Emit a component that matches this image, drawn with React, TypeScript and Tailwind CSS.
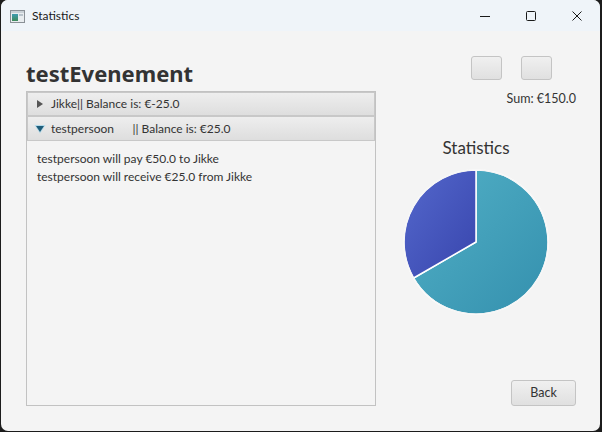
import React from "react";

const font = { fontFamily: 'Lato, "Noto Sans", sans-serif' };
const titleFont = { fontFamily: '"Noto Sans", "Open Sans", sans-serif' };

function AppIcon() {
  return (
    <svg width="15" height="13" viewBox="0 0 15 13">
      <rect x="0.5" y="0.5" width="14" height="12" fill="#e8ecef" stroke="#8a9096" />
      <rect x="1" y="1" width="13" height="2" fill="#c9d0d6" />
      <defs>
        <linearGradient id="ig" x1="0" y1="0" x2="0" y2="1">
          <stop offset="0" stopColor="#3e9bb0" />
          <stop offset="1" stopColor="#3f8a5a" />
        </linearGradient>
      </defs>
      <rect x="2" y="4" width="6" height="7" fill="url(#ig)" />
      <rect x="9" y="4" width="4" height="2" fill="#b9c3cb" />
    </svg>
  );
}

function Pie() {
  return (
    <svg width="146" height="146" viewBox="-1 -1 146 146">
      <defs>
        <linearGradient id="teal" x1="0" y1="0" x2="1" y2="1">
          <stop offset="0" stopColor="#52b0c6" />
          <stop offset="1" stopColor="#3490ae" />
        </linearGradient>
        <linearGradient id="blue" x1="0" y1="0" x2="1" y2="1">
          <stop offset="0" stopColor="#5468cc" />
          <stop offset="1" stopColor="#3845ad" />
        </linearGradient>
      </defs>
      <path d="M72,72 L9.65,108 A72,72 0 1 0 72,0 Z" fill="url(#teal)" stroke="#ffffff" strokeWidth="1.5" strokeLinejoin="round" />
      <path d="M72,72 L72,0 A72,72 0 0 0 9.65,108 Z" fill="url(#blue)" stroke="#ffffff" strokeWidth="1.5" strokeLinejoin="round" />
      <circle cx="72" cy="72" r="72" fill="none" stroke="#f4f4f4" strokeWidth="1" />
    </svg>
  );
}

export default function App() {
  return (
    <div className="w-[602px] h-[432px] bg-[#1c1c1c] pl-[1px] pr-[2px] pb-[1px]" style={font}>
      <div className="w-full h-full rounded-[7px] overflow-hidden bg-[#f4f4f4] flex flex-col">
        {/* title bar */}
        <div className="h-[31px] bg-[#eff4f9] flex items-center shrink-0">
          <div className="ml-[9px] mt-[1px] flex items-center">
            <AppIcon />
          </div>
          <span className="ml-[7px] text-[12px] text-[#1a1a1a]">Statistics</span>
          <div className="ml-auto flex items-center h-full">
            <div className="w-[46px] h-full flex items-center justify-center">
              <svg width="10" height="10" viewBox="0 0 10 10"><line x1="0" y1="5.5" x2="10" y2="5.5" stroke="#1a1a1a" strokeWidth="1" /></svg>
            </div>
            <div className="w-[46px] h-full flex items-center justify-center">
              <svg width="10" height="10" viewBox="0 0 10 10"><rect x="0.5" y="0.5" width="9" height="9" rx="1" fill="none" stroke="#1a1a1a" strokeWidth="1" /></svg>
            </div>
            <div className="w-[46px] h-full flex items-center justify-center">
              <svg width="10" height="10" viewBox="0 0 10 10"><path d="M0.5 0.5 L9.5 9.5 M9.5 0.5 L0.5 9.5" stroke="#1a1a1a" strokeWidth="1" /></svg>
            </div>
          </div>
        </div>
        {/* content */}
        <div className="flex-1 flex">
          <div className="ml-[25px] w-[350px] flex flex-col pb-[25px]">
            <div className="h-[60px] flex items-end pb-[3px]">
              <h1 className="text-[22px] font-bold text-[#333333] leading-[30px]" style={titleFont}>testEvenement</h1>
            </div>
            <div className="flex-1 border border-[#c2c2c2] flex flex-col">
              <div className="h-[24px] border border-[#c8c8c8] bg-gradient-to-b from-[#eeeeee] to-[#dedede] flex items-center">
                <svg className="ml-[9px]" width="6" height="8" viewBox="0 0 6 8"><path d="M0 0 L6 4 L0 8 Z" fill="#555555" /></svg>
                <span className="ml-[8px] text-[12px] text-[#333333]">Jikke|| Balance is: €-25.0</span>
              </div>
              <div className="h-[25px] border border-[#c8c8c8] bg-gradient-to-b from-[#eeeeee] to-[#dedede] flex items-center">
                <svg className="ml-[6px]" width="12" height="10" viewBox="0 0 12 10">
                  <path d="M0.5 1 L11.5 1 L6 9.5 Z" fill="#9fd4ea" opacity="0.7" />
                  <path d="M2 2 L10 2 L6 8 Z" fill="#1f5d7a" />
                </svg>
                <span className="ml-[5px] text-[12px] text-[#333333] whitespace-pre">testpersoon      || Balance is: €25.0</span>
              </div>
              <div className="flex-1 pt-[9px] pl-[10px] text-[12px] leading-[18px] text-[#333333]">
                <div>testpersoon will pay €50.0 to Jikke</div>
                <div>testpersoon will receive €25.0 from Jikke</div>
              </div>
            </div>
          </div>
          <div className="flex-1 flex flex-col">
            <div className="flex justify-end gap-[19px] pr-[48px] pt-[25px]">
              <button className="w-[31px] h-[24px] rounded-[3px] border border-[#c4c4c4] bg-gradient-to-b from-[#f0f0f0] to-[#e0e0e0]" />
              <button className="w-[31px] h-[24px] rounded-[3px] border border-[#c4c4c4] bg-gradient-to-b from-[#f0f0f0] to-[#e0e0e0]" />
            </div>
            <div className="mt-[11px] pr-[24px] text-right text-[12.5px] leading-[16px] text-[#333333]">Sum: €150.0</div>
            <div className="ml-[27px] w-[146px] flex flex-col items-center">
              <div className="mt-[30px] text-[17px] leading-[22px] text-[#333333]">Statistics</div>
              <div className="mt-[10px]">
                <Pie />
              </div>
            </div>
            <button className="mt-auto mb-[25px] mr-[24px] self-end w-[65px] h-[26px] rounded-[3px] border border-[#c4c4c4] bg-gradient-to-b from-[#f0f0f0] to-[#e0e0e0] text-[12.5px] text-[#333333]">Back</button>
          </div>
        </div>
      </div>
    </div>
  );
}
